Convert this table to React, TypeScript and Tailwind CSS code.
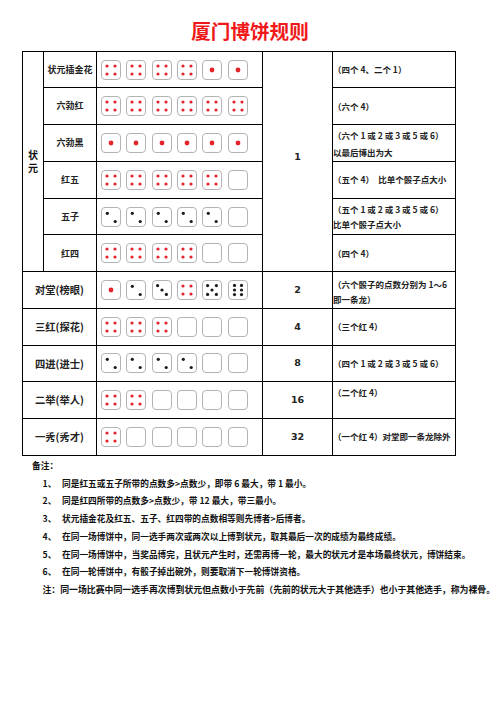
import React from "react";

const cjk = "font-['Noto_Sans_CJK_SC',sans-serif]";

const PIPS: Record<number, [number, number][]> = {
  1: [[10, 10]],
  2: [
    [6.3, 6.3],
    [14.2, 14.5],
  ],
  3: [
    [5.6, 5.6],
    [10, 10],
    [14.4, 14.4],
  ],
  4: [
    [6, 6],
    [14, 6],
    [6, 14],
    [14, 14],
  ],
  5: [
    [5.6, 5.6],
    [14.4, 5.6],
    [10, 10],
    [5.6, 14.4],
    [14.4, 14.4],
  ],
  6: [
    [6.5, 5.4],
    [13.5, 5.4],
    [6.5, 10],
    [13.5, 10],
    [6.5, 14.6],
    [13.5, 14.6],
  ],
};

function Die({ face }: { face: number }) {
  const red = face === 1 || face === 4;
  const pts = PIPS[face] ?? [];
  return (
    <svg width="20" height="20" viewBox="0 0 20 20" className="block shrink-0">
      <rect x="0.5" y="0.5" width="19" height="19" rx="3.5" fill="#fff" stroke="#b3b3b3" strokeWidth="1" />
      {pts.map(([x, y], i) => (
        <circle
          key={i}
          cx={x}
          cy={y}
          r={face === 1 ? 2.4 : 1.6}
          fill={red ? "#e3242b" : "#1a1a1a"}
        />
      ))}
    </svg>
  );
}

function Dice({ faces }: { faces: number[] }) {
  return (
    <div className="flex items-center gap-[5.3px] pl-[4.2px]">
      {faces.map((f, i) => (
        <Die key={i} face={f} />
      ))}
    </div>
  );
}

const td = "border border-black p-0";
const desc = `${td} text-[8.5px] font-bold text-[#222] ${cjk} align-middle`;

type Row = { label: string; faces: number[]; note: React.ReactNode; lead?: string };

const top: Row[] = [
  { label: "状元插金花", faces: [4, 4, 4, 4, 1, 1], note: "（四个 4、二个 1）" },
  { label: "六勃红", faces: [4, 4, 4, 4, 4, 4], note: "（六个 4）" },
  {
    label: "六勃黑",
    faces: [1, 1, 1, 1, 1, 1],
    note: (
      <>
        （六个 1 或 2 或 3 或 5 或 6）
        <br />
        以最后博出为大
      </>
    ),
    lead: "leading-[17px] pt-[2px]",
  },
  { label: "红五", faces: [4, 4, 4, 4, 4, 0], note: "（五个 4）　比单个骰子点大小" },
  {
    label: "五子",
    faces: [2, 2, 2, 2, 2, 0],
    note: (
      <>
        （五个 1 或 2 或 3 或 5 或 6）
        <br />
        比单个骰子点大小
      </>
    ),
    lead: "leading-[15px]",
  },
  { label: "红四", faces: [4, 4, 4, 4, 0, 0], note: "（四个 4）" },
];

const rest: (Row & { score: string; valign?: string })[] = [
  {
    label: "对堂(榜眼)",
    faces: [1, 2, 3, 4, 5, 6],
    score: "2",
    note: (
      <>
        （六个骰子的点数分别为 1～6
        <br />
        即一条龙）
      </>
    ),
    lead: "leading-[15px] pt-[5px]",
  },
  { label: "三红(探花)", faces: [4, 4, 4, 0, 0, 0], score: "4", note: "（三个红 4）" },
  { label: "四进(进士)", faces: [2, 2, 2, 2, 0, 0], score: "8", note: "（四个 1 或 2 或 3 或 5 或 6）" },
  { label: "二举(举人)", faces: [4, 4, 0, 0, 0, 0], score: "16", note: "（二个红 4）", valign: "align-top", lead: "pt-[2px] leading-[17px]" },
  { label: "一秀(秀才)", faces: [4, 0, 0, 0, 0, 0], score: "32", note: "（一个红 4）对堂即一条龙除外" },
];

const notes = [
  "同是红五或五子所带的点数多>点数少，即带 6 最大，带 1 最小。",
  "同是红四所带的点数多>点数少，带 12 最大，带三最小。",
  "状元插金花及红五、五子、红四带的点数相等则先博者>后博者。",
  "在同一场博饼中，同一选手两次或两次以上博到状元，取其最后一次的成绩为最终成绩。",
  "在同一场博饼中，当奖品博完，且状元产生时，还需再博一轮，最大的状元才是本场最终状元，博饼结束。",
  "在同一轮博饼中，有骰子掉出碗外，则要取消下一轮博饼资格。",
];

export default function App() {
  return (
    <div className={`h-[702px] w-[496px] overflow-hidden bg-white ${cjk}`}>
      <h1 className="pl-[4px] pt-[21px] text-center text-[19.6px] font-bold leading-[20px] text-[#f01818]">
        厦门博饼规则
      </h1>

      <table className="mt-[9.7px] ml-[22px] w-[433px] table-fixed">
        <colgroup>
          <col className="w-[21px]" />
          <col className="w-[53px]" />
          <col className="w-[166px]" />
          <col className="w-[70px]" />
          <col className="w-[123px]" />
        </colgroup>
        <tbody>
          {top.map((r, i) => (
            <tr key={r.label} className="h-[36.7px]">
              {i === 0 && (
                <td rowSpan={6} className={`${td} text-center text-[10px] font-bold text-[#111]`}>
                  <div className="flex flex-col items-center gap-[1px] leading-[11.5px]">
                    <span>状</span>
                    <span>元</span>
                  </div>
                </td>
              )}
              <td className={`${td} text-center text-[9px] font-bold text-[#222]`}>{r.label}</td>
              <td className={td}>
                <Dice faces={r.faces} />
              </td>
              {i === 0 && (
                <td
                  rowSpan={6}
                  className={`${td} text-center font-['DejaVu_Sans',sans-serif] text-[9.5px] font-bold text-[#222]`}
                >
                  <span className="relative -top-[4px]">1</span>
                </td>
              )}
              <td className={desc}>
                <div className={`whitespace-nowrap ${r.lead ?? "leading-[15px]"}`}>{r.note}</div>
              </td>
            </tr>
          ))}
          {rest.map((r) => (
            <tr key={r.label} className="h-[36.7px]">
              <td colSpan={2} className={`${td} text-center text-[10.3px] font-bold text-[#222]`}>
                {r.label}
              </td>
              <td className={td}>
                <Dice faces={r.faces} />
              </td>
              <td className={`${td} text-center font-['DejaVu_Sans',sans-serif] text-[9.5px] font-bold text-[#222]`}>
                {r.score}
              </td>
              <td className={`${desc} ${r.valign ?? ""}`}>
                <div className={`whitespace-nowrap ${r.lead ?? "leading-[15px]"}`}>{r.note}</div>
              </td>
            </tr>
          ))}
        </tbody>
      </table>

      <div className="mt-[1.5px] text-[8.7px] font-bold leading-[17.7px] text-[#111]">
        <p className="pl-[32px]">备注：</p>
        {notes.map((n, i) => (
          <p key={i} className="flex whitespace-nowrap pl-[42.5px]">
            <span className="w-[19.5px] shrink-0">{i + 1}、</span>
            <span>{n}</span>
          </p>
        ))}
        <p className="whitespace-nowrap pl-[42.5px] text-[8.9px]">
          注：同一场比赛中同一选手再次博到状元但点数小于先前（先前的状元大于其他选手）也小于其他选手，称为裸骨。
        </p>
      </div>
    </div>
  );
}
